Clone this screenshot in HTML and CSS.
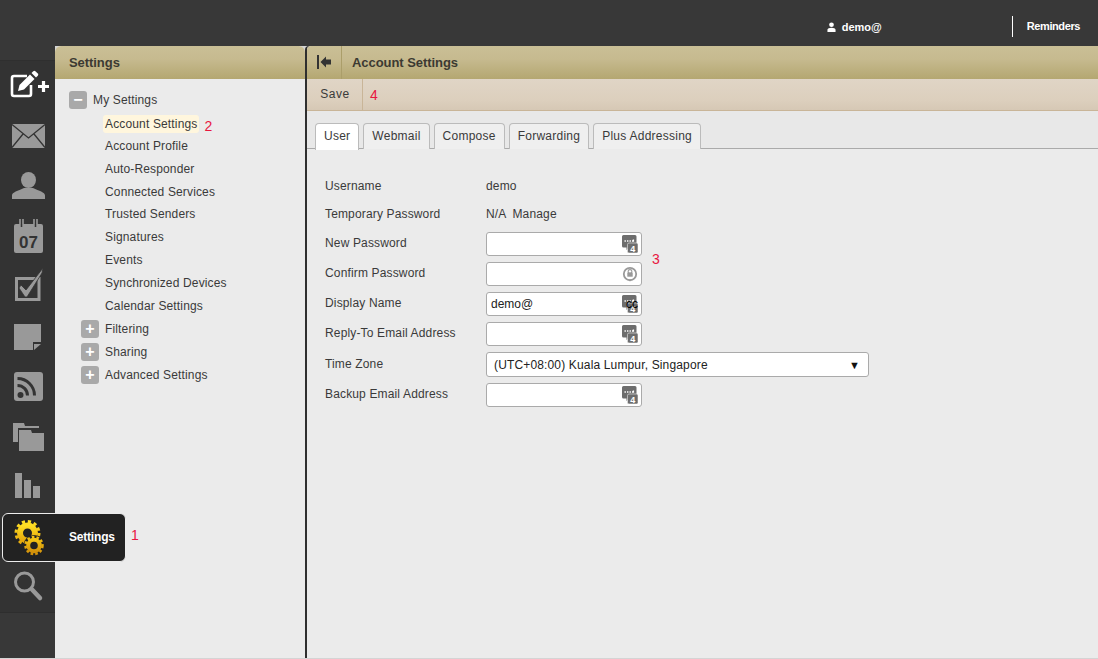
FILE: index.html
```html
<!DOCTYPE html>
<html lang="en">
<head>
<meta charset="utf-8">
<title>Account Settings</title>
<link rel="stylesheet" href="styles.css">
</head>
<body>
<header class="topbar">
  <div class="user">
    <svg class="user-icon" viewBox="0 0 10 11"><circle cx="5" cy="3" r="2.6" fill="#fff"/><path d="M0.5 11V8.6C0.5 7 2.5 6.2 5 6.2S9.5 7 9.5 8.6V11Z" fill="#fff"/></svg>
    <span>demo@</span>
  </div>
  <div class="reminders">Reminders</div>
</header>
<div class="main">
  <nav class="rail">
    <div class="rail-top"></div>
    <ul class="rail-list">
      <li class="rail-item"><svg viewBox="0 0 55 50"><path d="M27 15H14a2 2 0 0 0-2 2V33a2 2 0 0 0 2 2H29a2 2 0 0 0 2-2V24" fill="none" stroke="#fff" stroke-width="2.600"/><path d="M18 30l1.500-6L30 13.500l4.500 4.500L24 28.500Z" fill="#fff"/><path d="M31.500 12l1.800-1.800a1.500 1.500 0 0 1 2.100 0l2.400 2.400a1.500 1.500 0 0 1 0 2.100L36 16.500Z" fill="#fff"/><path d="M38 25.500h11M43.500 20v11" stroke="#fff" stroke-width="3.200"/></svg></li>
      <li class="rail-item"><svg viewBox="0 0 55 50"><rect x="12" y="13" width="33" height="24" fill="#999"/><path d="M12 13.500L28.500 27L45 13.500M12 36.500L23 23M45 36.500L34 23" fill="none" stroke="#333" stroke-width="1.300"/></svg></li>
      <li class="rail-item"><svg viewBox="0 0 55 50"><ellipse cx="28.500" cy="19" rx="7.500" ry="8" fill="#999"/><path d="M12 38V34.500C12 31 18 30 24 27H33C39 30 45 31 45 34.500V38Z" fill="#999"/></svg></li>
      <li class="rail-item"><svg viewBox="0 0 55 50"><rect x="14" y="13" width="29" height="29" rx="2" fill="#999"/><path d="M20 8V16a1.500 1.500 0 0 0 3 0V8M37 8V16a1.500 1.500 0 0 1-3 0V8" fill="none" stroke="#999" stroke-width="1.600"/><path d="M21.500 13v3M35.500 13v3" stroke="#333" stroke-width="1.500"/><text x="28.500" y="36.500" class="cal-text">07</text></svg></li>
      <li class="rail-item"><svg viewBox="0 0 55 50"><path d="M16.500 17.500H39V38.500H16.500Z" fill="none" stroke="#999" stroke-width="3"/><path d="M21 24l5 5L43 7l-1 5L27 36h-2l-6-9Z" fill="#999" stroke="#333" stroke-width=".8"/></svg></li>
      <li class="rail-item"><svg viewBox="0 0 55 50"><path d="M14 13H41V31H33V39H14Z" fill="#999"/><path d="M34 39V33H41Z" fill="#999"/></svg></li>
      <li class="rail-item"><svg viewBox="0 0 55 50"><rect x="14" y="11" width="29" height="29" rx="3" fill="#999"/><circle cx="20.500" cy="34" r="3" fill="#333"/><path d="M17.500 24.500a10 10 0 0 1 10 10M17.500 17.500a17 17 0 0 1 17 17" fill="none" stroke="#333" stroke-width="3"/></svg></li>
      <li class="rail-item"><svg viewBox="0 0 55 50"><path d="M13 31V12H24L25 15H39V17H18V31Z" fill="#999"/><path d="M19 40V19H31L32 22H44V40Z" fill="#999"/></svg></li>
      <li class="rail-item"><svg viewBox="0 0 55 50"><rect x="15" y="12" width="7" height="25" fill="#999"/><rect x="24" y="19" width="7" height="18" fill="#999"/><rect x="33" y="25" width="7" height="12" fill="#999"/></svg></li>
      <li class="rail-item rail-active">
        <div class="rail-tip">
          <svg class="gears" viewBox="0 0 30 36"><defs><linearGradient id="gy" x1="0" y1="0" x2="0" y2="1"><stop offset="0" stop-color="#ffdf24"/><stop offset="1" stop-color="#e6a80c"/></linearGradient><linearGradient id="go" x1="0" y1="0" x2="0" y2="1"><stop offset="0" stop-color="#f4c414"/><stop offset="1" stop-color="#d4920a"/></linearGradient></defs><g fill="none"><circle cx="13.500" cy="13" r="11.500" stroke="url(#gy)" stroke-width="3" stroke-dasharray="3.200 2.820"/><circle cx="13.500" cy="13" r="7.500" stroke="url(#gy)" stroke-width="6"/><circle cx="20" cy="25.500" r="10.500" fill="#222"/><circle cx="20" cy="25.500" r="8.500" stroke="url(#go)" stroke-width="2.500" stroke-dasharray="2.600 2.100"/><circle cx="20" cy="25.500" r="5.800" stroke="url(#go)" stroke-width="4"/></g></svg>
          <span>Settings</span>
        </div>
        <span class="mark mark-tip">1</span>
      </li>
      <li class="rail-item"><svg viewBox="0 0 55 50"><circle cx="24.500" cy="21" r="9" fill="none" stroke="#999" stroke-width="3"/><path d="M32 28.500L40 37" stroke="#999" stroke-width="4.500" stroke-linecap="round"/></svg></li>
    </ul>
  </nav>

  <aside class="side">
    <h2 class="bar-head side-head">Settings</h2>
    <ul class="tree">
      <li class="tree-row tree-root"><span class="tog">&#8722;</span>My Settings</li>
      <li class="tree-row tree-leaf"><span class="chosen">Account Settings</span><span class="mark mark-two">2</span></li>
      <li class="tree-row tree-leaf">Account Profile</li>
      <li class="tree-row tree-leaf">Auto-Responder</li>
      <li class="tree-row tree-leaf">Connected Services</li>
      <li class="tree-row tree-leaf">Trusted Senders</li>
      <li class="tree-row tree-leaf">Signatures</li>
      <li class="tree-row tree-leaf">Events</li>
      <li class="tree-row tree-leaf">Synchronized Devices</li>
      <li class="tree-row tree-leaf">Calendar Settings</li>
      <li class="tree-row tree-group"><span class="tog">+</span>Filtering</li>
      <li class="tree-row tree-group"><span class="tog">+</span>Sharing</li>
      <li class="tree-row tree-group"><span class="tog">+</span>Advanced Settings</li>
    </ul>
  </aside>

  <section class="content">
    <div class="bar-head content-head">
      <span class="collapse"><svg viewBox="0 0 14 14"><rect x="0" y="0" width="2" height="14" fill="#333"/><path d="M3.500 7L9 1.500V4.500H14V9.500H9V12.500Z" fill="#333"/></svg></span>
      <h1 class="content-title">Account Settings</h1>
    </div>
    <div class="toolbar">
      <button class="save" type="button">Save</button>
      <span class="mark mark-four">4</span>
    </div>
    <div class="tabs">
      <span class="tab tab-on">User</span>
      <span class="tab">Webmail</span>
      <span class="tab">Compose</span>
      <span class="tab">Forwarding</span>
      <span class="tab">Plus Addressing</span>
    </div>
    <form class="form">
      <div class="row row-a"><label>Username</label><span>demo</span></div>
      <div class="row row-b"><label>Temporary Password</label><span>N/A</span><span class="manage">Manage</span></div>
      <div class="row row-c"><label>New Password</label>
        <div class="field"><input type="text">
          <svg class="fi" viewBox="0 0 16 18"><use href="#bub"/></svg>
          <span class="mark mark-three">3</span>
        </div>
      </div>
      <div class="row row-c"><label>Confirm Password</label>
        <div class="field"><input type="text">
          <svg class="fi" viewBox="0 0 16 18"><circle cx="8" cy="9" r="6.200" fill="none" stroke="#999" stroke-width="1.800"/><path d="M8 16.500l-2.500-2h5Z" fill="#999"/><circle cx="8" cy="6.500" r="1.900" fill="none" stroke="#999" stroke-width="1.100"/><rect x="5.300" y="7.500" width="5.400" height="4.200" fill="#999"/></svg>
        </div>
      </div>
      <div class="row row-c"><label>Display Name</label>
        <div class="field"><input type="text" value="demo@">
          <svg class="fi" viewBox="0 0 16 18"><use href="#bub"/></svg>
          <span class="cc">cc</span>
        </div>
      </div>
      <div class="row row-c"><label>Reply-To Email Address</label>
        <div class="field"><input type="text">
          <svg class="fi" viewBox="0 0 16 18"><use href="#bub"/></svg>
        </div>
      </div>
      <div class="row row-tz"><label>Time Zone</label>
        <div class="tz"><span>(UTC+08:00) Kuala Lumpur, Singapore</span><span class="tz-arrow">&#9660;</span></div>
      </div>
      <div class="row row-c"><label>Backup Email Address</label>
        <div class="field"><input type="text">
          <svg class="fi" viewBox="0 0 16 18"><use href="#bub"/></svg>
        </div>
      </div>
    </form>
  </section>
</div>
<svg class="defs" width="0" height="0"><defs><g id="bub"><path d="M1.500 0H13a1.500 1.500 0 0 1 1.500 1.500V11a1.500 1.500 0 0 1-1.500 1.500H7L4.500 15V12.500H1.500A1.500 1.500 0 0 1 0 11V1.500A1.500 1.500 0 0 1 1.500 0Z" fill="#6d6d6d"/><path d="M2.500 6h1.400M5 6h1.400M7.500 6h1.400M10 6h1.400v-1.500" stroke="#fff" stroke-width="1.400" fill="none"/><rect x="5.500" y="8" width="10.500" height="10" rx="1.500" fill="#6d6d6d" stroke="#eee" stroke-width=".6"/><text x="10.700" y="16.700" class="bub-text">4</text></g></defs></svg>
</body>
</html>
```
FILE: styles.css
```css
* { box-sizing: border-box; }
html, body { height: 100%; }
body {
  margin: 0;
  height: 659px;
  overflow: hidden;
  background: #d4d4d4;
  font-family: "Liberation Sans", Arial, sans-serif;
  font-size: 12px;
  letter-spacing: .15px;
  color: #3a3a3a;
  display: flex;
  flex-direction: column;
}
ul { list-style: none; margin: 0; padding: 0; }
h1, h2 { margin: 0; }

.topbar {
  height: 46px;
  flex: none;
  display: flex;
  justify-content: flex-end;
  align-items: center;
  padding: 0 18px 0 0;
  background: #383838;
  color: #fff;
  font-size: 11px;
  font-weight: bold;
  letter-spacing: 0;
}
.user { display: flex; align-items: center; gap: 6px; margin: 8px 130px 0 0; }
.user-icon { width: 9px; height: 10px; }
.reminders { border-left: 1px solid #fff; height: 21px; line-height: 21px; padding-left: 14px; margin-top: 7px; letter-spacing: -.4px; }

.main { flex: 1; display: flex; min-height: 0; padding-bottom: 1px; background: #d4d4d4; }
.rail { width: 55px; flex: none; display: flex; flex-direction: column; background: #383838; }
.rail-top { height: 15px; }
.rail-list { background: #333; border-bottom: 1px solid #2e2e2e; border-top: 1px solid #2f2f2f; height: 553px; margin-top: -1px; }
.rail-item { height: 50px; position: relative; }
.rail-item > svg { display: block; width: 55px; height: 50px; }
.cal-text { font: bold 17px "Liberation Sans", sans-serif; letter-spacing: 0; fill: #333; text-anchor: middle; }
.rail-tip {
  position: absolute;
  z-index: 3;
  left: 2px;
  top: 2px;
  width: 124px;
  height: 49px;
  background: #222;
  border: 1px solid #ececec;
  border-radius: 6px;
  display: flex;
  align-items: center;
  color: #fff;
  font-weight: bold;
  letter-spacing: -.2px;
}
.rail-tip span { margin-top: -2px; }
.gears { width: 30px; height: 36px; margin: 0 25px 0 11px; flex: none; }
.mark { color: #e8173f; font-size: 14px; letter-spacing: 0; }
.mark-tip { position: absolute; z-index: 3; left: 131px; top: 16px; }

.side { width: 250px; flex: none; background: #ebebeb; border-top-left-radius: 6px; border-top-right-radius: 6px; }
.bar-head {
  height: 33px;
  background: linear-gradient(#cabf96, #c6ba8f 40%, #b4a771);
  font-size: 13px;
  font-weight: bold;
  line-height: 33px;
  color: #3c3a32;
  letter-spacing: -.06px;
}
.side-head { padding-left: 14px; border-radius: 6px 6px 0 0; }
.tree { padding-top: 10px; }
.tree-row { height: 22.9px; line-height: 23px; display: flex; align-items: center; white-space: nowrap; }
.tree-root { padding-left: 14px; }
.tree-leaf { padding-left: 50px; }
.tree-group { padding-left: 26px; }
.tog {
  width: 18px;
  height: 18px;
  background: #a9a9a9;
  border-radius: 3px;
  color: #fff;
  font-size: 16px;
  font-weight: bold;
  text-align: center;
  line-height: 17px;
  letter-spacing: 0;
  margin-right: 6px;
  flex: none;
}
.chosen { background: #fff6dd; border-radius: 3px; padding: 2px 2px; margin: 2px 0 0 -2px; line-height: 14px; }
.mark-two { margin-left: 5px; margin-top: 6px; }

.content { flex: 1; margin-left: 2px; background: #ebebeb; min-width: 0; display: flex; flex-direction: column; box-shadow: -2px 0 0 #2f2f2f; border-top-left-radius: 4px; }
.content-head { display: flex; border-radius: 4px 0 0 0; }
.collapse { width: 35px; height: 33px; border-right: 1px solid #ab9e6a; display: flex; align-items: center; padding-left: 10px; }
.collapse svg { width: 14px; height: 14px; margin-top: -2px; }
.content-title { font: inherit; font-weight: bold; padding-left: 10px; }
.toolbar {
  height: 32px;
  background: linear-gradient(#e0d5c6, #dccfbd 70%, #d6c8b5);
  border-bottom: 1px solid #c9b598;
  display: flex;
  align-items: center;
}
.save {
  font: inherit;
  font-size: 12px;
  letter-spacing: .5px;
  color: #3a3a3a;
  background: none;
  border: 0;
  border-right: 1px solid #c9b598;
  height: 31px;
  width: 56px;
  padding: 0 0 1px 1px;
  margin: 0;
  text-align: center;
}
.mark-four { margin-left: 7px; margin-top: 1px; }
.tabs { height: 38px; padding: 12px 0 0 8px; display: flex; gap: 4px; border-bottom: 1px solid #aaa; background: #e8e8e8; flex: none; }
.tab {
  height: 26px;
  padding: 0 8px;
  line-height: 24px;
  background: #efefef;
  border: 1px solid #bbb;
  border-bottom: 0;
  border-radius: 4px 4px 0 0;
  letter-spacing: .25px;
}
.tab-on { background: #fff; height: 27px; margin-bottom: -1px; }

.form { padding: 23px 0 0 18px; flex: 1; }
.row { display: flex; align-items: center; }
.row label { width: 161px; flex: none; margin-top: -2px; }
.row-a { height: 28px; }
.row-a label, .row-b label { margin-top: 0; }
.row-b { height: 28px; margin-bottom: 4px; }
.manage { margin-left: 6px; }
.row-c { height: 24px; margin-bottom: 6px; }
.row-tz { height: 25px; margin-bottom: 6px; }
.field { position: relative; width: 156px; height: 24px; }
.field input {
  width: 100%;
  height: 100%;
  margin: 0;
  padding: 0 30px 0 4px;
  border: 1px solid #aaa;
  border-radius: 3px;
  background: #fff;
  font: inherit;
  color: #222;
  outline: 0;
}
.fi { position: absolute; right: 4px; top: 3px; width: 16px; height: 18px; }
.cc { position: absolute; right: 4px; top: 5px; color: #000; font-size: 12px; letter-spacing: 0; }
.mark-three { position: absolute; left: 166px; top: 19px; }
.tz {
  width: 383px;
  height: 25px;
  background: #fff;
  border: 1px solid #aaa;
  border-radius: 3px;
  display: flex;
  align-items: center;
  justify-content: space-between;
  padding: 0 8px 0 7px;
  color: #222;
}
.tz-arrow { font-size: 11px; color: #111; letter-spacing: 0; }
.bub-text { font: bold 9px "Liberation Sans", sans-serif; fill: #fff; text-anchor: middle; letter-spacing: 0; }
.defs { position: absolute; }
```
